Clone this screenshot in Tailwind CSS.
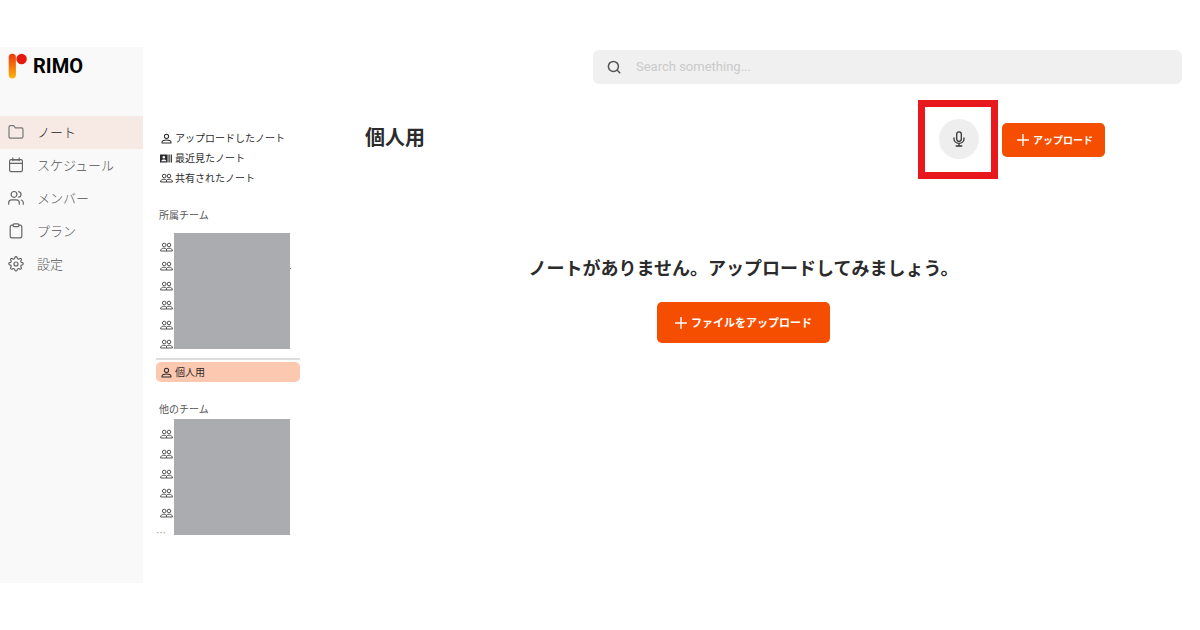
<!DOCTYPE html>
<html lang="ja">
<head>
  <meta charset="UTF-8">
  <meta name="viewport" content="width=device-width, initial-scale=1.0">
  <title>Rimo - ノート</title>
  <script src="https://cdn.jsdelivr.net/npm/@tailwindcss/browser@4"></script>
</head>
<body class="bg-white min-h-screen pt-[47px] pb-[47px] flex items-stretch font-['Noto_Sans_CJK_JP',sans-serif] text-[#2b2b2b]">

  <!-- Shared icons -->
  <svg class="hidden">
    <symbol id="person" viewBox="0 0 12 12" fill="none" stroke="currentColor" stroke-width="1.1">
      <circle cx="6" cy="3.6" r="2.3"/>
      <path d="M1.1 10.800V10C1.100 8.500 3.500 7.600 6 7.600s4.900.9 4.900 2.400v.8z"/>
    </symbol>
    <symbol id="people" viewBox="0 0 13 10" fill="none" stroke="currentColor" stroke-width=".9">
      <circle cx="4.2" cy="3" r="1.8"/>
      <circle cx="9" cy="3" r="1.8"/>
      <path d="M.6 9c0-1.900 1.400-2.800 3.300-2.800 1.100 0 2 .4 2.600 1 .6-.6 1.500-1 2.600-1 1.900 0 3.300.9 3.300 2.800zM6.500 7.200V9"/>
    </symbol>
    <symbol id="plus" viewBox="0 0 12 12" fill="none" stroke="currentColor" stroke-width="1.4">
      <path d="M6 0v12M0 6h12"/>
    </symbol>
  </svg>

  <!-- Sidebar -->
  <aside class="w-[143px] shrink-0 bg-[#f9f9f9]">
    <a href="#" class="flex items-center h-[38px] pl-2 gap-[6px]" aria-label="RIMO">
      <svg class="w-[19px] h-[26px]" viewBox="0 0 19 26">
        <defs>
          <linearGradient id="bar" x1="0" y1="0" x2="0" y2="1">
            <stop offset="0" stop-color="#ea3a0c"/>
            <stop offset=".55" stop-color="#f47a0b"/>
            <stop offset="1" stop-color="#fdb40a"/>
          </linearGradient>
        </defs>
        <rect x=".7" y=".8" width="7.2" height="24.6" rx="3.6" fill="url(#bar)"/>
        <circle cx="13.6" cy="6" r="5.2" fill="#e6190f"/>
      </svg>
      <span class="font-['Roboto',sans-serif] font-bold text-xl text-black">RIMO</span>
    </a>
    <nav class="mt-[31px] text-[13px] font-light text-[#555]">
      <a href="#" class="flex items-center h-[33px] pl-2 pb-[2px] gap-[13px] bg-[#f7eae5] text-[#222]">
        <svg class="size-4 text-[#777]" viewBox="0 0 16 16" fill="none" stroke="currentColor" stroke-width="1.2" stroke-linejoin="round"><path d="M1 3.2C1 2.2 1.6 1.6 2.6 1.6h3l1.8 2.2h6c1 0 1.6.6 1.6 1.6v7.2c0 1-.6 1.6-1.6 1.6H2.6c-1 0-1.6-.6-1.6-1.6z"/></svg>
        ノート
      </a>
      <a href="#" class="flex items-center h-[33px] pl-2 pb-[2px] gap-[13px]">
        <svg class="size-4 text-[#666]" viewBox="0 0 16 16" fill="none" stroke="currentColor" stroke-width="1.2"><rect x="1.6" y="2.6" width="12.8" height="12" rx="1.4"/><path d="M1.6 6.4h12.8M4.8.6v3.6M11.2.6v3.6M4.8 2.9h6.4"/></svg>
        スケジュール
      </a>
      <a href="#" class="flex items-center h-[33px] pl-2 pb-[2px] gap-[13px]">
        <svg class="size-4 text-[#666]" viewBox="0 0 16 16" fill="none" stroke="currentColor" stroke-width="1.2" stroke-linecap="round"><circle cx="6" cy="4.4" r="2.9"/><path d="M.7 14.2v-1.4c0-1.8 1.2-3 3-3h4.6c1.8 0 3 1.2 3 3v1.4M10.6 1.6c1.5.3 2.4 1.4 2.4 2.8s-.9 2.5-2.4 2.8M13.2 10c1.3.4 2.1 1.4 2.1 2.8v1.4"/></svg>
        メンバー
      </a>
      <a href="#" class="flex items-center h-[33px] pl-2 pb-[2px] gap-[13px]">
        <svg class="size-4 text-[#666]" viewBox="0 0 16 16" fill="none" stroke="currentColor" stroke-width="1.2"><path d="M5.2 2.2H3.8c-.9 0-1.6.7-1.6 1.6v9.4c0 .9.7 1.6 1.6 1.6h8.4c.9 0 1.6-.7 1.6-1.6V3.8c0-.9-.7-1.6-1.6-1.6h-1.4"/><rect x="5.2" y=".9" width="5.6" height="2.7" rx=".9"/></svg>
        プラン
      </a>
      <a href="#" class="flex items-center h-[33px] pl-2 pb-[2px] gap-[13px]">
        <svg class="size-4 text-[#666]" viewBox="0 0 24 24" fill="none" stroke="currentColor" stroke-width="1.8"><circle cx="12" cy="12" r="3"/><path d="M10.300 2.300c.5-1.700 2.900-1.700 3.400 0l.3 1c.3 1 1.600 1.600 2.600 1l.9-.4c1.600-.9 3.300.8 2.400 2.400l-.5.9c-.5 1 0 2.200 1.100 2.500l1 .3c1.700.5 1.700 2.900 0 3.400l-1 .3c-1.100.3-1.600 1.600-1.100 2.600l.5.9c.9 1.600-.8 3.300-2.400 2.400l-.9-.5c-1-.5-2.300 0-2.600 1.100l-.3 1c-.5 1.700-2.900 1.700-3.400 0l-.3-1c-.3-1.100-1.600-1.600-2.600-1.100l-.9.5c-1.600.9-3.300-.8-2.400-2.400l.5-.9c.5-1 0-2.300-1.100-2.600l-1-.3c-1.700-.5-1.700-2.900 0-3.400l1-.3c1.100-.3 1.600-1.500 1.100-2.500l-.5-.9c-.9-1.600.8-3.300 2.400-2.400l.9.400c1 .6 2.300 0 2.600-1z"/></svg>
        設定
      </a>
    </nav>
  </aside>

  <div class="flex-1 min-w-0">
    <!-- Search -->
    <header class="pt-[3px] pl-[450px] pr-[18px]">
      <label class="flex items-center h-[34px] rounded-md bg-[#f0f0f0] pl-[14px] gap-[15px]">
        <svg class="size-[14px] shrink-0 text-[#555]" viewBox="0 0 14 14" fill="none" stroke="currentColor" stroke-width="1.5"><circle cx="6.4" cy="6.4" r="5"/><path d="M10 10l3.2 3.2"/></svg>
        <input type="search" aria-label="Search" placeholder="Search something..." class="flex-1 min-w-0 bg-transparent outline-none font-['Roboto',sans-serif] text-[13px] placeholder:text-[#cacaca]">
      </label>
    </header>

    <div class="flex">
      <!-- Notes and teams -->
      <div class="w-[157px] shrink-0 pl-[13px] pt-11 text-[10px] leading-5">
        <nav class="flex flex-col justify-between h-[59px] pl-1">
          <a href="#" class="flex items-center gap-[3px] h-5"><span class="w-3 flex justify-end"><svg class="size-[11px]"><use href="#person"/></svg></span>アップロードしたノート</a>
          <a href="#" class="flex items-center gap-[3px] h-5">
            <svg class="w-3 h-[9px]" viewBox="0 0 12 9" fill="currentColor"><path fill-rule="evenodd" d="M0 .5h7.600v8H0zM3.800 2a1.300 1.300 0 100 2.600 1.300 1.300 0 000-2.600zM1.300 7.200h5c0-1.200-1.200-1.800-2.500-1.800s-2.500.6-2.500 1.800z"/><path d="M8.500.5h1.200v8H8.500zM10.700.5h1.200v8h-1.200z"/></svg>
            最近見たノート
          </a>
          <a href="#" class="flex items-center gap-[2px] h-5"><svg class="w-[13px] h-[10px]"><use href="#people"/></svg>共有されたノート</a>
        </nav>

        <h2 class="mt-[18px] pl-[3px] text-[#555]">所属チーム</h2>
        <div class="mt-2 pl-1 flex gap-px">
          <div class="flex flex-col justify-between pt-[9px] w-[13px] h-[116px] text-[#444]">
            <svg class="w-[13px] h-[10px]"><use href="#people"/></svg>
            <svg class="w-[13px] h-[10px]"><use href="#people"/></svg>
            <svg class="w-[13px] h-[10px]"><use href="#people"/></svg>
            <svg class="w-[13px] h-[10px]"><use href="#people"/></svg>
            <svg class="w-[13px] h-[10px]"><use href="#people"/></svg>
            <svg class="w-[13px] h-[10px]"><use href="#people"/></svg>
          </div>
          <div class="w-[116px] h-[116px] bg-[#abacb0]"></div>
          <span class="-ml-px mt-[35px] size-px bg-[#888]"></span>
        </div>

        <hr class="mt-[9px] border-t-2 border-[#ddd]">
        <a href="#" class="mt-[2px] flex items-center gap-[3px] h-5 pl-1 rounded-[5px] bg-[#fcc8b0]"><span class="w-3 flex justify-end"><svg class="size-[11px]"><use href="#person"/></svg></span>個人用</a>

        <h2 class="mt-[17px] pl-[3px] text-[#555]">他のチーム</h2>
        <div class="pl-1 flex gap-px">
          <div class="w-[13px] text-[#444]">
            <div class="flex flex-col justify-between pt-[10px] h-[99px]">
              <svg class="w-[13px] h-[10px]"><use href="#people"/></svg>
              <svg class="w-[13px] h-[10px]"><use href="#people"/></svg>
              <svg class="w-[13px] h-[10px]"><use href="#people"/></svg>
              <svg class="w-[13px] h-[10px]"><use href="#people"/></svg>
              <svg class="w-[13px] h-[10px]"><use href="#people"/></svg>
            </div>
            <p class="-ml-1 mt-[5px] text-[#999]">…</p>
          </div>
          <div class="w-[116px] h-[116px] bg-[#abacb0]"></div>
        </div>
      </div>

      <!-- Content -->
      <main class="flex-1 min-w-0 pt-4">
        <div class="flex items-center justify-between pl-[65px] pr-[95px]">
          <h1 class="text-xl font-bold pb-[5px]">個人用</h1>
          <div class="flex items-center gap-1">
            <div class="pt-3 pb-[13px] pl-[14px] pr-3 border-7 border-[#e8191c]">
              <button type="button" aria-label="録音" class="size-10 rounded-full bg-[#eee] flex items-center justify-center text-[#333]">
                <svg class="w-3 h-4" viewBox="0 0 12 16" fill="none" stroke="currentColor" stroke-width="1.3" stroke-linecap="round"><rect x="3.7" y=".8" width="4.6" height="9.6" rx="2.3"/><path d="M1 7v.8c0 2.700 2.200 4.600 5 4.600s5-1.900 5-4.600V7M6 12.400V15M3.200 15h5.600"/></svg>
              </button>
            </div>
            <button type="button" class="flex items-center gap-1 h-[34px] pl-[15px] pr-3 rounded-[5px] bg-[#f54e00] text-white text-[10px] font-bold"><svg class="size-3"><use href="#plus"/></svg>アップロード</button>
          </div>
        </div>

        <div class="mt-[72px] pr-[13px] flex flex-col items-center">
          <p class="text-lg font-bold leading-8">ノートがありません。アップロードしてみましょう。</p>
          <button type="button" class="mt-[19px] flex items-center gap-1 h-[41px] px-[18px] rounded-[5px] bg-[#f54e00] text-white text-[11px] font-bold"><svg class="size-3"><use href="#plus"/></svg>ファイルをアップロード</button>
        </div>
      </main>
    </div>
  </div>
</body>
</html>
